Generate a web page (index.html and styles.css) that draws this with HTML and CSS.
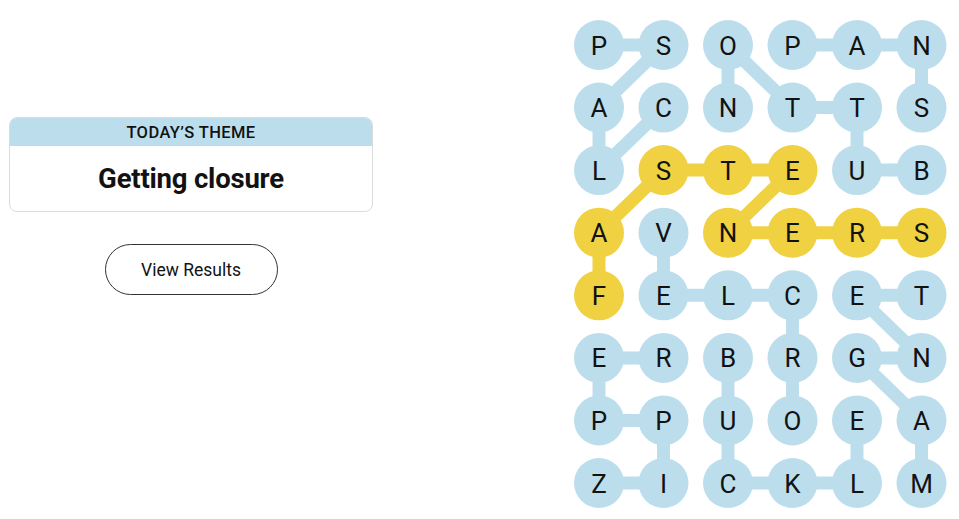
FILE: index.html
```html
<!DOCTYPE html>
<html>
<head>
<meta charset="utf-8">
<link rel="stylesheet" href="styles.css">
</head>
<body>
<div class="page">
  <section class="side">
    <div class="theme-card">
      <div class="theme-head">TODAY’S THEME</div>
      <div class="theme-body">Getting closure</div>
    </div>
    <button class="results-btn">View Results</button>
  </section>
  <svg class="board" width="389" height="519" viewBox="0 0 389 519">
    <g class="links blue">
      <line x1="29" y1="45" x2="93.5" y2="45"/>
      <line x1="93.5" y1="45" x2="29" y2="107.6"/>
      <line x1="29" y1="107.6" x2="29" y2="170.1"/>
      <line x1="29" y1="170.1" x2="93.5" y2="107.6"/>
      <line x1="158" y1="45" x2="158" y2="107.6"/>
      <line x1="158" y1="45" x2="222.5" y2="107.6"/>
      <line x1="222.5" y1="107.6" x2="287" y2="107.6"/>
      <line x1="287" y1="107.6" x2="287" y2="170.1"/>
      <line x1="287" y1="170.1" x2="351.5" y2="170.1"/>
      <line x1="222.5" y1="45" x2="351.5" y2="45"/>
      <line x1="351.5" y1="45" x2="351.5" y2="107.6"/>
      <line x1="93.5" y1="232.7" x2="93.5" y2="295.3"/>
      <line x1="93.5" y1="295.3" x2="222.5" y2="295.3"/>
      <line x1="222.5" y1="295.3" x2="222.5" y2="420.4"/>
      <line x1="287" y1="295.3" x2="351.5" y2="295.3"/>
      <line x1="287" y1="295.3" x2="351.5" y2="357.9"/>
      <line x1="287" y1="357.9" x2="351.5" y2="357.9"/>
      <line x1="287" y1="357.9" x2="351.5" y2="420.4"/>
      <line x1="351.5" y1="420.4" x2="351.5" y2="483"/>
      <line x1="29" y1="357.9" x2="93.5" y2="357.9"/>
      <line x1="29" y1="357.9" x2="29" y2="420.4"/>
      <line x1="29" y1="420.4" x2="93.5" y2="420.4"/>
      <line x1="93.5" y1="420.4" x2="93.5" y2="483"/>
      <line x1="29" y1="483" x2="93.5" y2="483"/>
      <line x1="158" y1="357.9" x2="158" y2="483"/>
      <line x1="158" y1="483" x2="287" y2="483"/>
      <line x1="287" y1="420.4" x2="287" y2="483"/>
    </g>
    <g class="links gold">
      <line x1="29" y1="295.3" x2="29" y2="232.7"/>
      <line x1="29" y1="232.7" x2="93.5" y2="170.1"/>
      <line x1="93.5" y1="170.1" x2="222.5" y2="170.1"/>
      <line x1="222.5" y1="170.1" x2="158" y2="232.7"/>
      <line x1="158" y1="232.7" x2="351.5" y2="232.7"/>
    </g>
    <g class="cells">
      <circle cx="29" cy="45" r="25"/><circle cx="93.5" cy="45" r="25"/><circle cx="158" cy="45" r="25"/><circle cx="222.5" cy="45" r="25"/><circle cx="287" cy="45" r="25"/><circle cx="351.5" cy="45" r="25"/>
      <circle cx="29" cy="107.6" r="25"/><circle cx="93.5" cy="107.6" r="25"/><circle cx="158" cy="107.6" r="25"/><circle cx="222.5" cy="107.6" r="25"/><circle cx="287" cy="107.6" r="25"/><circle cx="351.5" cy="107.6" r="25"/>
      <circle cx="29" cy="170.1" r="25"/><circle class="on" cx="93.5" cy="170.1" r="25"/><circle class="on" cx="158" cy="170.1" r="25"/><circle class="on" cx="222.5" cy="170.1" r="25"/><circle cx="287" cy="170.1" r="25"/><circle cx="351.5" cy="170.1" r="25"/>
      <circle class="on" cx="29" cy="232.7" r="25"/><circle cx="93.5" cy="232.7" r="25"/><circle class="on" cx="158" cy="232.7" r="25"/><circle class="on" cx="222.5" cy="232.7" r="25"/><circle class="on" cx="287" cy="232.7" r="25"/><circle class="on" cx="351.5" cy="232.7" r="25"/>
      <circle class="on" cx="29" cy="295.3" r="25"/><circle cx="93.5" cy="295.3" r="25"/><circle cx="158" cy="295.3" r="25"/><circle cx="222.5" cy="295.3" r="25"/><circle cx="287" cy="295.3" r="25"/><circle cx="351.5" cy="295.3" r="25"/>
      <circle cx="29" cy="357.9" r="25"/><circle cx="93.5" cy="357.9" r="25"/><circle cx="158" cy="357.9" r="25"/><circle cx="222.5" cy="357.9" r="25"/><circle cx="287" cy="357.9" r="25"/><circle cx="351.5" cy="357.9" r="25"/>
      <circle cx="29" cy="420.4" r="25"/><circle cx="93.5" cy="420.4" r="25"/><circle cx="158" cy="420.4" r="25"/><circle cx="222.5" cy="420.4" r="25"/><circle cx="287" cy="420.4" r="25"/><circle cx="351.5" cy="420.4" r="25"/>
      <circle cx="29" cy="483" r="25"/><circle cx="93.5" cy="483" r="25"/><circle cx="158" cy="483" r="25"/><circle cx="222.5" cy="483" r="25"/><circle cx="287" cy="483" r="25"/><circle cx="351.5" cy="483" r="25"/>
    </g>
    <g class="letters">
      <text x="29" y="54.5">P</text><text x="93.5" y="54.5">S</text><text x="158" y="54.5">O</text><text x="222.5" y="54.5">P</text><text x="287" y="54.5">A</text><text x="351.5" y="54.5">N</text>
      <text x="29" y="117.1">A</text><text x="93.5" y="117.1">C</text><text x="158" y="117.1">N</text><text x="222.5" y="117.1">T</text><text x="287" y="117.1">T</text><text x="351.5" y="117.1">S</text>
      <text x="29" y="179.6">L</text><text x="93.5" y="179.6">S</text><text x="158" y="179.6">T</text><text x="222.5" y="179.6">E</text><text x="287" y="179.6">U</text><text x="351.5" y="179.6">B</text>
      <text x="29" y="242.2">A</text><text x="93.5" y="242.2">V</text><text x="158" y="242.2">N</text><text x="222.5" y="242.2">E</text><text x="287" y="242.2">R</text><text x="351.5" y="242.2">S</text>
      <text x="29" y="304.8">F</text><text x="93.5" y="304.8">E</text><text x="158" y="304.8">L</text><text x="222.5" y="304.8">C</text><text x="287" y="304.8">E</text><text x="351.5" y="304.8">T</text>
      <text x="29" y="367.4">E</text><text x="93.5" y="367.4">R</text><text x="158" y="367.4">B</text><text x="222.5" y="367.4">R</text><text x="287" y="367.4">G</text><text x="351.5" y="367.4">N</text>
      <text x="29" y="429.9">P</text><text x="93.5" y="429.9">P</text><text x="158" y="429.9">U</text><text x="222.5" y="429.9">O</text><text x="287" y="429.9">E</text><text x="351.5" y="429.9">A</text>
      <text x="29" y="492.5">Z</text><text x="93.5" y="492.5">I</text><text x="158" y="492.5">C</text><text x="222.5" y="492.5">K</text><text x="287" y="492.5">L</text><text x="351.5" y="492.5">M</text>
    </g>
  </svg>
</div>
</body>
</html>
```

FILE: styles.css
```css
html, body {
  margin: 0;
  padding: 0;
  background: #ffffff;
  overflow: hidden;
}

.page {
  display: flex;
  align-items: flex-start;
  width: 959px;
  height: 519px;
  padding-left: 9px;
  box-sizing: border-box;
  font-family: Roboto, "Liberation Sans", sans-serif;
  color: #121212;
}

.side {
  width: 364px;
  padding-top: 117px;
  display: flex;
  flex-direction: column;
  align-items: center;
}

.theme-card {
  width: 100%;
  box-sizing: border-box;
  border: 1px solid #dcdcdc;
  border-radius: 8px;
  overflow: hidden;
}

.theme-head {
  height: 28px;
  background: #bcdeec;
  display: flex;
  align-items: center;
  justify-content: center;
  font-size: 16.5px;
  font-weight: 500;
  letter-spacing: 0.4px;
  color: #121212;
}

.theme-body {
  height: 65px;
  display: flex;
  align-items: center;
  justify-content: center;
  font-size: 27.5px;
  font-weight: 700;
  letter-spacing: -0.2px;
  color: #121212;
}

.results-btn {
  margin-top: 32px;
  width: 173px;
  height: 51px;
  border: 1px solid #333333;
  border-radius: 26px;
  background: #ffffff;
  font-family: Roboto, "Liberation Sans", sans-serif;
  font-size: 17.5px;
  color: #121212;
  padding: 0;
}

.board {
  display: block;
  margin-left: 197px;
}

.links line {
  stroke-width: 13;
}

.links.blue line {
  stroke: #bcdeec;
}

.links.gold line {
  stroke: #f0d142;
}

.cells circle {
  fill: #bcdeec;
}

.cells circle.on {
  fill: #f0d142;
}

.letters text {
  font-family: Roboto, "Liberation Sans", sans-serif;
  font-size: 26px;
  font-weight: 400;
  text-anchor: middle;
  fill: #121212;
}
```
